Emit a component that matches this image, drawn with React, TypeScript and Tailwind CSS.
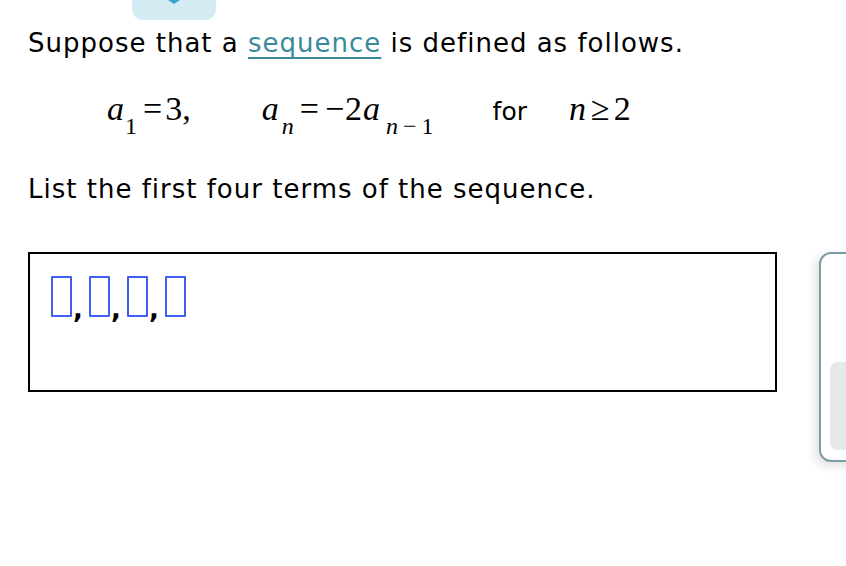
import React from "react";

const sans = { fontFamily: '"DejaVu Sans", Verdana, sans-serif' };
const serif = { fontFamily: '"Liberation Serif", "Times New Roman", serif' };

function Box() {
  return <span className="inline-block w-[21px] h-[41px] border-2 border-[#3f5ef5] rounded-[1px]" />;
}
function Comma() {
  return (
    <span className="inline-block w-[17px] text-[26px] font-bold leading-none text-black self-end -mb-[5px] pl-[1px]" style={sans}>
      ,
    </span>
  );
}

export default function App() {
  return (
    <div className="relative w-[846px] h-[566px] bg-white overflow-hidden">
      {/* top tab */}
      <div className="absolute left-[132px] top-0 w-[84px] h-[20px] bg-[#d4ecf3] rounded-b-[11px] flex justify-center">
        <svg width="16" height="5" viewBox="0 0 16 5">
          <path d="M2 0 L8 4 L14 0 Z" fill="#3fa5c8" />
        </svg>
      </div>

      <div className="flex">
        <div className="pl-[28px] w-[777px] shrink-0">
          <p className="pt-[27px] text-[26px] leading-[32px] text-black tracking-[1px]" style={sans}>
            Suppose that a{" "}
            <span className="text-[#3a8a9c] underline decoration-[2px] underline-offset-[5px]">sequence</span> is
            defined as follows.
          </p>

          <div className="mt-[33px] h-[40px] flex items-baseline text-black" style={serif}>
            <span className="ml-[79px] text-[34px] italic leading-none">a</span>
            <span className="ml-[1px] text-[24px] leading-none relative top-[14px]">1</span>
            <span className="ml-[6px] text-[34px] leading-none">=</span>
            <span className="ml-[3px] text-[34px] leading-none">3,</span>

            <span className="ml-[71px] text-[34px] italic leading-none">a</span>
            <span className="ml-[3px] text-[24px] italic leading-none relative top-[14px]">n</span>
            <span className="ml-[6px] text-[34px] leading-none">=</span>
            <span className="ml-[6px] text-[34px] leading-none">−</span>
            <span className="ml-[1px] text-[34px] leading-none">2</span>
            <span className="ml-[1px] text-[34px] italic leading-none">a</span>
            <span className="ml-[6px] text-[24px] italic leading-none relative top-[14px]">n</span>
            <span className="ml-[5px] text-[24px] leading-none relative top-[14px]">−</span>
            <span className="ml-[5px] text-[24px] leading-none relative top-[14px]">1</span>

            <span className="ml-[59px] text-[25px] leading-none" style={sans}>
              for
            </span>

            <span className="ml-[42px] text-[34px] italic leading-none">n</span>
            <span className="ml-[5px] text-[34px] leading-none">≥</span>
            <span className="ml-[4px] text-[34px] leading-none">2</span>
          </div>

          <p className="mt-[41px] text-[26px] leading-[32px] text-black tracking-[1px]" style={sans}>
            List the first four terms of the sequence.
          </p>

          <div className="mt-[47px] h-[140px] border-2 border-black pl-[21px] pt-[22px]">
            <div className="flex items-start h-[41px]">
              <Box />
              <Comma />
              <Box />
              <Comma />
              <Box />
              <Comma />
              <Box />
            </div>
          </div>
        </div>

        <div className="ml-[42px] mt-[252px] w-[120px] h-[210px] shrink-0 border-2 border-[#7f9ba4] rounded-[12px] bg-white shadow-[-4px_4px_10px_rgba(0,0,0,0.12)] pl-[9px] pt-[108px]">
          <div className="h-[88px] bg-[#e6e9eb] rounded-[7px]" />
        </div>
      </div>
    </div>
  );
}
